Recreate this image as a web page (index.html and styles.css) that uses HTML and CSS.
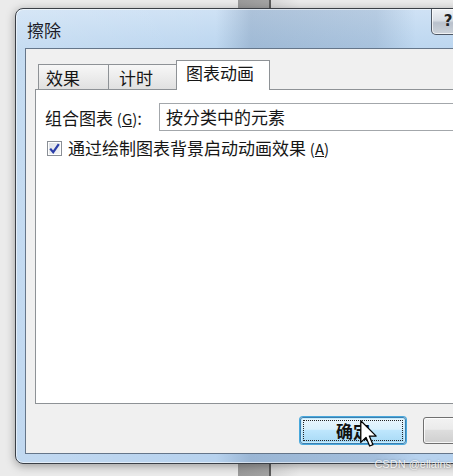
FILE: index.html
```html
<!DOCTYPE html>
<html lang="zh-CN">
<head>
  <meta charset="UTF-8" />
  <title>擦除</title>
  <meta name="viewport" content="width=device-width, initial-scale=1.0" />
  <link rel="stylesheet" href="styles.css">
</head>
<body>
  <div class="desk">
    <div class="window">
      <div class="titlebar">
        <span class="title">擦除</span>
        <div class="help-btn">?</div>
      </div>

      <div class="client">
        <div class="tabs">
          <div class="tab">效果</div>
          <div class="tab">计时</div>
          <div class="tab active">图表动画</div>
        </div>

        <div class="panel">
          <div class="field-row">
            <span class="label">组合图表 <span class="key">(<u>G</u>)</span>:</span>
            <div class="combo">按分类中的元素</div>
          </div>
          <div class="check-row">
            <span class="checkbox">
              <svg width="11" height="11" viewBox="0 0 11 11">
                <path d="M1.2 5.6 L4.2 9.2 L9.8 1.2" fill="none" stroke="#2b3ea8" stroke-width="2.2" />
              </svg>
            </span>
            <span>通过绘制图表背景启动动画效果 <span class="key">(<u>A</u>)</span></span>
          </div>
        </div>

        <div class="buttons">
          <button class="btn default"><span class="focus">确定</span></button>
          <button class="btn"></button>
        </div>
      </div>
    </div>

    <svg class="cursor" width="17" height="28" viewBox="0 0 12 20">
      <path d="M0.5 0.5 L0.5 16 L4.2 12.4 L6.8 18.6 L9.2 17.6 L6.6 11.5 L11.5 11.5 Z"
            fill="#fff" stroke="#000" stroke-width="0.9" stroke-linejoin="round" />
    </svg>

    <div class="watermark">CSDN @ellains</div>
  </div>
</body>
</html>
```

FILE: styles.css
```css
* {
  box-sizing: border-box;
}

html, body {
  margin: 0;
  padding: 0;
  width: 100%;
  height: 100%;
  overflow: hidden;
  font-family: "Noto Sans CJK SC", "Noto Sans", sans-serif;
  color: #161616;
}

.desk {
  position: relative;
  width: 100%;
  height: 100%;
  padding: 8px 0 0 15px;
  background:
    linear-gradient(90deg, transparent 238px, #9a9a9a 238px, #a4a4a4 269px, #5c5c5c 269px, #5c5c5c 271px, #d8d8d8 271px, transparent 300px),
    #ebebeb;
}

.window {
  width: 462px;
  height: 456px;
  border: 1px solid #3a3f46;
  border-radius: 8px;
  padding: 0 9px 9px 9px;
  display: flex;
  flex-direction: column;
  background:
    linear-gradient(90deg, rgba(255,255,255,0.15) 0, rgba(255,255,255,0) 200px, rgba(40,70,110,0.2) 235px, rgba(40,70,110,0.14) 360px, rgba(255,255,255,0) 400px),
    linear-gradient(180deg, #cfe2f5 0, #bcd6ef 40px, #b7d2ee 100%);
  box-shadow: 0 2px 10px rgba(0, 0, 0, 0.35), inset 0 0 0 1px rgba(255, 255, 255, 0.55);
}

.titlebar {
  height: 39px;
  display: flex;
  justify-content: space-between;
  align-items: flex-start;
  flex-shrink: 0;
}

.title {
  margin: 11px 0 0 2px;
  font-size: 17px;
  line-height: 20px;
  color: #1c1c28;
}

.help-btn {
  width: 34px;
  height: 26px;
  margin-right: 2px;
  border: 1px solid #4f5865;
  border-top: none;
  border-radius: 0 0 0 5px;
  background: linear-gradient(180deg, #eef1f5 0, #d9dee5 45%, #b9c1cc 55%, #cdd3da 100%);
  font-family: "DejaVu Sans", sans-serif;
  font-weight: bold;
  font-size: 15px;
  line-height: 24px;
  text-align: center;
  color: #222;
  box-shadow: inset 0 0 0 1px rgba(255,255,255,0.7);
}

.client {
  flex: 1;
  border: 1px solid #65768a;
  background: #f0f0f0;
  padding: 11px 9px 0 9px;
  display: flex;
  flex-direction: column;
}

.tabs {
  display: flex;
  align-items: flex-end;
  height: 29px;
  padding-left: 3px;
}

.tab {
  height: 25px;
  padding: 1px 0 0 7px;
  border: 1px solid #8e9296;
  border-bottom: none;
  border-right: none;
  background: linear-gradient(180deg, #f7f7f7 0, #ececec 50%, #e0e0e0 100%);
  font-size: 17px;
  line-height: 24px;
  width: 70px;
}

.tab:nth-child(2) {
  width: 68px;
  padding-left: 10px;
}

.tab.active {
  position: relative;
  z-index: 1;
  height: 30px;
  width: 94px;
  margin-bottom: -1px;
  padding: 0 0 0 9px;
  border-right: 1px solid #8e9296;
  background: #fff;
  line-height: 24px;
}

.panel {
  height: 315px;
  flex-shrink: 0;
  border: 1px solid #8e9296;
  background: #fff;
  padding: 13px 0 0 9px;
}

.field-row {
  display: flex;
  align-items: center;
  height: 28px;
}

.label {
  width: 114px;
  font-size: 17px;
  white-space: nowrap;
}

.key {
  font-size: 15px;
}

.combo {
  flex: 1;
  height: 28px;
  border: 1px solid #a3a7ab;
  border-right: none;
  padding-left: 6px;
  font-size: 17px;
  line-height: 25px;
  background: #fff;
}

.check-row {
  display: flex;
  align-items: center;
  gap: 6px;
  margin-top: 6px;
  padding-left: 2px;
  font-size: 17px;
  line-height: 22px;
}

.checkbox {
  width: 15px;
  height: 15px;
  border: 1px solid #8a8f96;
  background: linear-gradient(135deg, #dde1e6 0, #f6f7f8 100%);
  display: flex;
  align-items: center;
  justify-content: center;
  box-shadow: inset 0 0 0 1px #fff;
}

.buttons {
  display: flex;
  gap: 17px;
  margin: 13px 0 0 265px;
}

.btn {
  flex-shrink: 0;
  width: 106px;
  height: 27px;
  padding: 0;
  border: 1px solid #707070;
  border-radius: 3px;
  background: linear-gradient(180deg, #f2f2f2 0, #ebebeb 45%, #dddddd 50%, #cfcfcf 100%);
  box-shadow: inset 0 0 0 1px rgba(255,255,255,0.8);
  font-family: "Noto Sans CJK SC", sans-serif;
  font-size: 17px;
  color: #111;
}

.btn.default {
  border-color: #3c7fb1;
  background: linear-gradient(180deg, #eaf6fd 0, #d9f0fc 45%, #bee6fd 50%, #a7d9f5 100%);
  box-shadow: 0 0 0 1px #48a8dc, inset 0 0 0 1px #c8ecfb;
  padding: 2px;
}

.focus {
  display: block;
  height: 100%;
  border: 1px dotted #222;
  line-height: 20px;
  font-weight: bold;
}

.cursor {
  position: absolute;
  left: 360px;
  top: 420px;
}

.watermark {
  position: absolute;
  right: 2px;
  top: 458px;
  font-family: "Liberation Sans", sans-serif;
  font-size: 11px;
  color: rgba(255, 255, 255, 0.85);
  text-shadow: 0 0 2px rgba(0, 0, 0, 0.35);
}
```
